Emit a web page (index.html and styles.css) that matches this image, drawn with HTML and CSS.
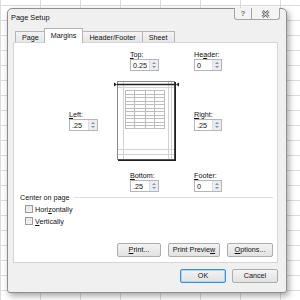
FILE: index.html
```html
<!DOCTYPE html>
<html lang="en">
  <head>
    <meta charset="UTF-8">
    <title>Page Setup</title>
    <link rel="stylesheet" href="styles.css">
  </head>
  <body>
    <div class="desk">
      <div class="dialog">
        <div class="titlebar">
          <span class="title">Page Setup</span>
          <div class="caption">
            <span class="caption-help">?</span>
            <span class="caption-close">
              <svg width="9" height="8" viewBox="0 0 9 8"><path d="M1.5 1l6 6M7.5 1l-6 6" stroke="#666" stroke-width="2.6"/><path d="M1.5 1l6 6M7.5 1l-6 6" stroke="#fff" stroke-width="1"/></svg>
            </span>
          </div>
        </div>

        <div class="tabs">
          <span class="tab">Page</span>
          <span class="tab active">Margins</span>
          <span class="tab">Header/Footer</span>
          <span class="tab">Sheet</span>
        </div>

        <div class="panel">
          <div class="margins">
            <div class="field field-mid">
              <label><u>T</u>op:</label>
              <div class="spin"><span class="spin-val">0.25</span><span class="spin-btns"><i class="up"></i><i class="down"></i></span></div>
            </div>
            <div class="field field-right">
              <label>He<u>a</u>der:</label>
              <div class="spin"><span class="spin-val">0</span><span class="spin-btns"><i class="up"></i><i class="down"></i></span></div>
            </div>

            <div class="field field-side">
              <label><u>L</u>eft:</label>
              <div class="spin"><span class="spin-val">.25</span><span class="spin-btns"><i class="up"></i><i class="down"></i></span></div>
            </div>
            <div class="preview">
              <svg width="65" height="80" viewBox="0 0 65 80">
                <rect x="3.5" y="0.5" width="57" height="78" fill="#fff" stroke="#8a8a8a"/>
                <path d="M9.5 1v77M54.5 1v77M57.5 1v77M4 68.5h56M4 73.5h56M4 6.5h56" stroke="#d2d2d2"/>
                <path d="M61.2 1v79M4 79.2h58" stroke="#1e1e1e" stroke-width="1.6"/>
                <path d="M11.5 9v39M20.5 9v39M31.5 9v39M40.5 9v39M50.5 9v39" stroke="#bdbdbd"/>
                <path d="M11 9.5h40M11 13.5h40M11 16.5h40M11 20.5h40M11 23.5h40M11 27.5h40M11 30.5h40M11 34.5h40M11 37.5h40M11 41.5h40M11 44.5h40M11 47.5h40" stroke="#bdbdbd"/>
                <path d="M3 3.5h59" stroke="#222" stroke-width="1.3"/>
                <path d="M0 1.5l3 2-3 2zM65 1.5l-3 2 3 2z" fill="#222"/>
              </svg>
            </div>
            <div class="field field-side field-right">
              <label><u>R</u>ight:</label>
              <div class="spin"><span class="spin-val">.25</span><span class="spin-btns"><i class="up"></i><i class="down"></i></span></div>
            </div>

            <div class="field field-mid field-below">
              <label><u>B</u>ottom:</label>
              <div class="spin"><span class="spin-val">.25</span><span class="spin-btns"><i class="up"></i><i class="down"></i></span></div>
            </div>
            <div class="field field-right field-below">
              <label><u>F</u>ooter:</label>
              <div class="spin"><span class="spin-val">0</span><span class="spin-btns"><i class="up"></i><i class="down"></i></span></div>
            </div>
          </div>

          <div class="group-title">Center on page</div>
          <div class="checks">
            <div class="check"><span class="box"></span><span>Hori<u>z</u>ontally</span></div>
            <div class="check"><span class="box"></span><span><u>V</u>ertically</span></div>
          </div>

          <div class="actions">
            <button class="btn btn-print"><u>P</u>rint...</button>
            <button class="btn btn-preview">Print Previe<u>w</u></button>
            <button class="btn btn-options"><u>O</u>ptions...</button>
          </div>
        </div>

        <div class="footer">
          <button class="btn btn-wide btn-default">OK</button>
          <button class="btn btn-wide">Cancel</button>
        </div>
      </div>
    </div>
  </body>
</html>
```

FILE: styles.css
```css
body {
  margin: 0;
  font-family: "Liberation Sans", Arial, sans-serif;
  font-size: 7.2px;
  color: #111;
}

u {
  text-decoration-thickness: 1px;
  text-underline-offset: 1px;
}

.desk {
  width: 300px;
  height: 300px;
  position: relative;
  overflow: hidden;
  background-color: #fff;
  background-image:
    linear-gradient(to right, #dcdcdc 1px, transparent 1px),
    linear-gradient(#dcdcdc 1px, transparent 1px);
  background-size: 40px 15px;
  background-position: 0 5px;
}

/* window */
.dialog {
  position: absolute;
  left: 7px;
  top: 8px;
  width: 278px;
  height: 283px;
  border: 1px solid #8e8e8e;
  border-radius: 5px 5px 3px 3px;
  background: #f0f0f0;
  box-shadow: 2px 3px 6px rgba(0, 0, 0, 0.35);
  display: flex;
  flex-direction: column;
}

.titlebar {
  height: 19px;
  display: flex;
  align-items: flex-start;
  padding-left: 3px;
}

.title {
  margin-top: 4px;
  font-size: 7.4px;
}

.caption {
  margin-left: auto;
  margin-right: 6px;
  margin-top: -1px;
  display: flex;
  height: 11px;
  border: 1px solid #a5a5a5;
  border-top: none;
  border-radius: 0 0 3px 3px;
  background: #f4f4f4;
}

.caption-help {
  width: 16px;
  border-right: 1px solid #a5a5a5;
  text-align: center;
  line-height: 11px;
  font-size: 8px;
  font-weight: bold;
  color: #777;
}

.caption-close {
  width: 27px;
  display: flex;
  align-items: center;
  justify-content: center;
}

/* tabs */
.tabs {
  display: flex;
  align-items: flex-end;
  height: 14px;
  padding-left: 7px;
}

.tab {
  height: 10px;
  line-height: 11px;
  padding: 0 6px;
  border: 1px solid #b5b5b5;
  border-bottom: none;
  margin-right: -1px;
  background: linear-gradient(#f3f3f3, #e6e6e6);
}

.tab.active {
  height: 14px;
  line-height: 13px;
  margin: 0 -1px -1px -1px;
  background: #fff;
  position: relative;
  z-index: 1;
}

.panel {
  margin: 0 8px 0 5px;
  border: 1px solid #d6d6d6;
  background: #fff;
  padding: 7px 4px 5px 6px;
  display: flex;
  flex-direction: column;
}

/* margin fields */
.margins {
  display: grid;
  grid-template-columns: 30px 65px 28px;
  grid-template-rows: auto 79px auto;
  column-gap: 15px;
  row-gap: 10px;
  margin-left: 49px;
}

.field {
  display: flex;
  flex-direction: column;
  align-items: flex-start;
}

.field label {
  line-height: 9px;
}

.field-mid {
  grid-column: 2;
  margin-left: 16px;
}

.field-right {
  grid-column: 3;
}

.field-side {
  grid-row: 2;
  align-self: center;
  margin-top: -1px;
}

.margins > .field-side:not(.field-right) {
  grid-column: 1;
}

.field-below {
  grid-row: 3;
  margin-top: 1px;
}

.spin {
  display: flex;
  width: 29px;
  height: 12px;
  box-sizing: border-box;
  border: 1px solid #b4b6bc;
  background: #fff;
}

.field-right .spin {
  width: 28px;
}

.spin-val {
  flex: 1;
  padding-left: 2px;
  line-height: 11px;
}

.spin-btns {
  width: 8px;
  display: flex;
  flex-direction: column;
  background: #ececec;
  border-left: 1px solid #dedede;
}

.spin-btns i {
  flex: 1;
  position: relative;
}

.spin-btns i::after {
  content: "";
  position: absolute;
  left: 2px;
  border-left: 2px solid transparent;
  border-right: 2px solid transparent;
}

.spin-btns .up::after {
  top: 2px;
  border-bottom: 2px solid #7d94b8;
}

.spin-btns .down::after {
  top: 1px;
  border-top: 2px solid #7d94b8;
}

.preview {
  grid-column: 2;
  grid-row: 2;
}

.preview svg {
  display: block;
}

/* centering */
.group-title {
  display: flex;
  align-items: center;
  gap: 4px;
  line-height: 9px;
  margin-top: 1px;
}

.group-title::after {
  content: "";
  flex: 1;
  height: 1px;
  background: #dcdcdc;
}

.checks {
  margin-top: 1px;
}

.check {
  display: flex;
  align-items: center;
  gap: 2px;
  height: 12px;
  padding-left: 5px;
}

.check .box {
  width: 6px;
  height: 6px;
  border: 1px solid #9a9a9a;
  background: linear-gradient(#e6e6e6, #f3f3f3);
}

/* buttons */
.actions {
  display: flex;
  justify-content: flex-end;
  gap: 7px;
  margin-top: 16px;
}

.btn {
  height: 14px;
  padding: 0;
  box-sizing: border-box;
  border: 1px solid #acacac;
  border-radius: 2px;
  background: linear-gradient(#f3f3f3, #e2e2e2);
  font: inherit;
  color: #111;
  line-height: 12px;
  white-space: nowrap;
}

.btn-print {
  width: 44px;
}

.btn-preview {
  width: 52px;
}

.btn-options {
  width: 46px;
}

.footer {
  display: flex;
  justify-content: flex-end;
  gap: 6px;
  margin: 6px 8px 0 0;
}

.btn-wide {
  width: 46px;
}

.btn-default {
  border-color: #3d8fd6;
  box-shadow: inset 0 0 0 1px #a9d4f5;
}
```
